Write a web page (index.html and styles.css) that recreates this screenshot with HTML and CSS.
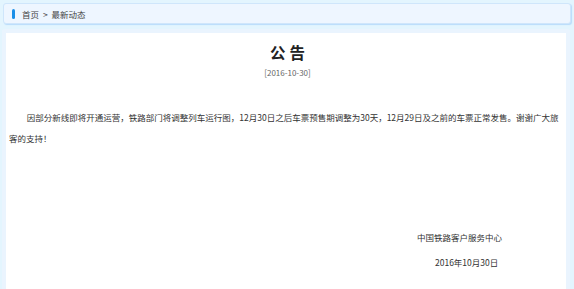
FILE: index.html
```html
<!DOCTYPE html>
<html lang="zh">
<head>
<meta charset="utf-8">
<link rel="stylesheet" href="styles.css">
</head>
<body>
<div class="page">
  <div class="crumb">
    <span class="mark"></span>
    <span class="crumb-text">首页 &gt; 最新动态</span>
  </div>
  <div class="panel">
    <div class="inner">
      <h1 class="title">公告</h1>
      <div class="date">[2016-10-30]</div>
      <p class="body-text">因部分新线即将开通运营，铁路部门将调整列车运行图，12月30日之后车票预售期调整为30天，12月29日及之前的车票正常发售。谢谢广大旅客的支持！</p>
      <div class="sign">中国铁路客户服务中心</div>
      <div class="sign-date">2016年10月30日</div>
    </div>
  </div>
</div>
</body>
</html>
```
FILE: styles.css
```css
html, body {
  margin: 0;
  padding: 0;
  height: 100%;
  overflow: hidden;
}
body {
  background: #e3f5fe;
  font-family: "Noto Sans CJK SC", "Noto Sans", sans-serif;
  color: #333;
}
.page {
  padding: 3px 3px 0 3px;
  display: flex;
  flex-direction: column;
  gap: 5px;
  height: 100%;
  box-sizing: border-box;
}
.crumb {
  height: 19px;
  background: #eef6ff;
  border: 1px solid #cfe6fb;
  border-radius: 3px;
  box-shadow: 1px 1px 1px #b9dcfb;
  display: flex;
  align-items: center;
  padding-left: 8px;
  gap: 7px;
}
.mark {
  width: 3px;
  height: 10px;
  border-radius: 2px;
  background: #1a8fe8;
}
.crumb-text {
  font-size: 8.5px;
  color: #444;
  word-spacing: 2px;
}
.panel {
  flex: 1;
  border: 4px solid #eaf4fe;
  border-bottom: none;
  border-radius: 3px 3px 0 0;
  background: #fff;
  margin-right: 1px;
  margin-left: -1px;
}
.inner {
  padding: 9px 0 0 3px;
}
.title {
  margin: 0;
  text-align: center;
  font-size: 15.5px;
  line-height: 20px;
  letter-spacing: 4px;
  text-indent: 4px;
  font-weight: bold;
  color: #222;
}
.date {
  margin-top: 4px;
  text-align: center;
  font-size: 8px;
  line-height: 14px;
  color: #666;
}
.body-text {
  margin: 27px 0 0 0;
  font-size: 8.5px;
  line-height: 21px;
  text-indent: 2.1em;
}
.sign {
  margin-top: 78px;
  margin-left: 408px;
  font-size: 8.5px;
  line-height: 20px;
}
.sign-date {
  margin-top: 5px;
  margin-left: 426px;
  font-size: 8.5px;
  line-height: 20px;
}
```
